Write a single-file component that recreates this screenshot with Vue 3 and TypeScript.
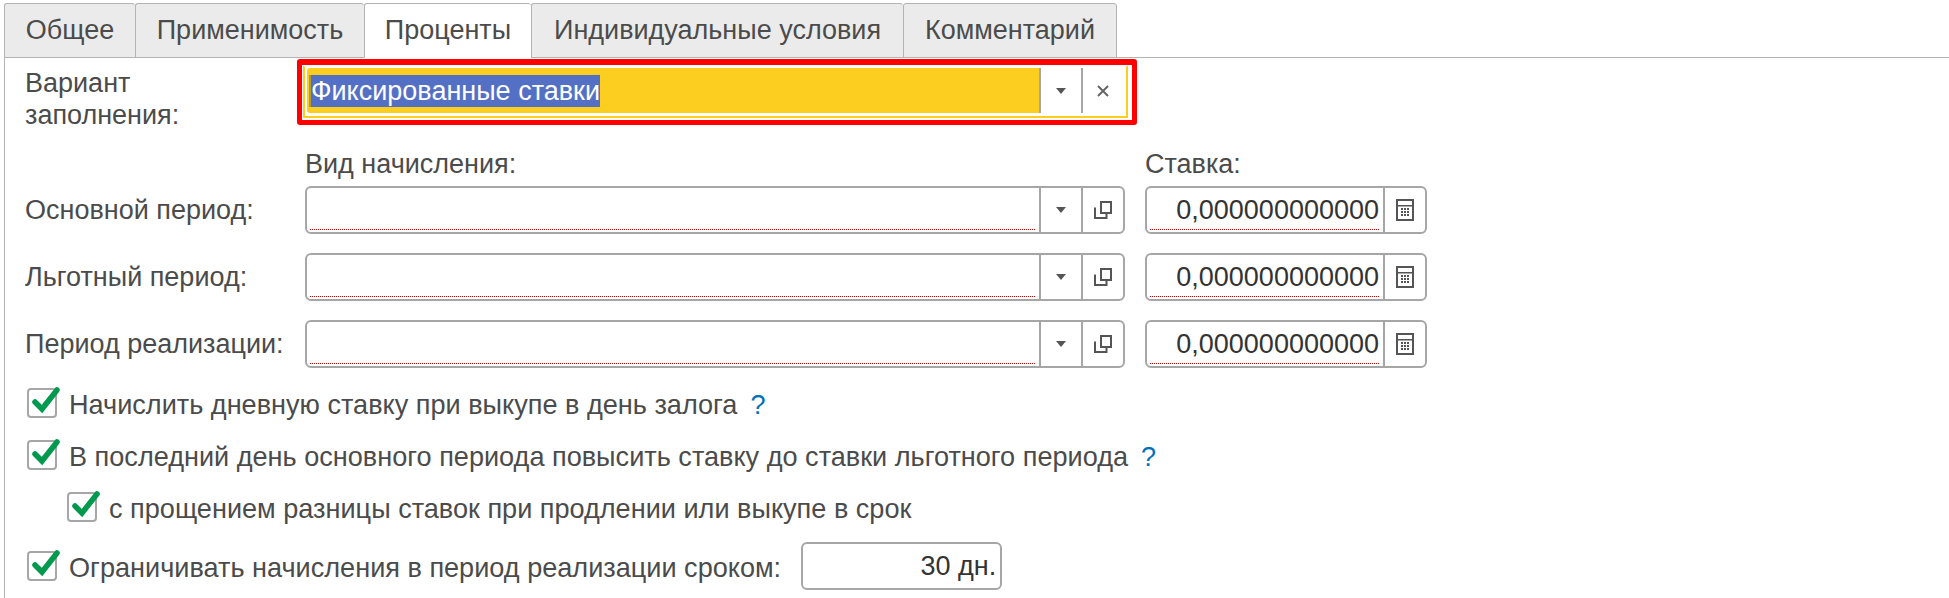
<script setup lang="ts">
const tabs = [
  { name: 'Общее', w: 131, active: false },
  { name: 'Применимость', w: 229, active: false },
  { name: 'Проценты', w: 167, active: true },
  { name: 'Индивидуальные условия', w: 372, active: false },
  { name: 'Комментарий', w: 214, active: false },
]
const periods = ['Основной период:', 'Льготный период:', 'Период реализации:']
</script>

<template>
  <div class="page">
    <div class="tabs">
      <div
        v-for="t in tabs"
        :key="t.name"
        class="tab"
        :class="{ active: t.active }"
        :style="{ width: t.w + 'px' }"
      >{{ t.name }}</div>
    </div>
    <div class="panel">
      <div class="variant">
        <div class="variant-label">Вариант<br />заполнения:</div>
        <div class="frame">
          <div class="focus">
            <div class="fill"><span class="sel">Фиксированные ставки</span></div>
            <div class="btn">
              <svg width="10" height="6" viewBox="0 0 10 6"><path d="M0 0h10L5 6z" fill="#555" /></svg>
            </div>
            <div class="btn">
              <svg width="12" height="12" viewBox="0 0 12 12"><path d="M1 1l10 10M11 1L1 11" stroke="#666" stroke-width="2" fill="none" /></svg>
            </div>
          </div>
        </div>
      </div>

      <div class="grid heads">
        <div></div>
        <div class="head">Вид начисления:</div>
        <div class="head">Ставка:</div>
      </div>

      <div v-for="p in periods" :key="p" class="grid period">
        <div class="label">{{ p }}</div>
        <div class="field">
          <div class="input"><span class="dots"></span></div>
          <div class="btn">
            <svg width="10" height="6" viewBox="0 0 10 6"><path d="M0 0h10L5 6z" fill="#555" /></svg>
          </div>
          <div class="btn">
            <svg width="18" height="18" viewBox="0 0 18 18" fill="none" stroke="#555" stroke-width="2">
              <path d="M1 6.500V17h11.500v-4" />
              <rect x="7" y="1" width="10" height="11" />
            </svg>
          </div>
        </div>
        <div class="field">
          <div class="input number"><span class="value">0,000000000000</span><span class="dots"></span></div>
          <div class="btn">
            <svg width="18" height="22" viewBox="0 0 18 22">
              <rect x="1" y="1" width="16" height="20" fill="none" stroke="#555" stroke-width="2" />
              <rect x="2" y="6" width="14" height="1.500" fill="#555" />
              <g fill="#555">
                <rect x="5" y="9" width="2" height="2" /><rect x="8" y="9" width="2" height="2" /><rect x="11" y="9" width="2" height="2" />
                <rect x="5" y="12" width="2" height="2" /><rect x="8" y="12" width="2" height="2" /><rect x="11" y="12" width="2" height="2" />
                <rect x="5" y="15" width="2" height="2" /><rect x="8" y="15" width="2" height="2" /><rect x="11" y="15" width="2" height="2" />
              </g>
            </svg>
          </div>
        </div>
      </div>

      <div class="checks">
        <div class="check">
          <span class="box"><svg class="tick" width="30" height="30" viewBox="0 0 30 30"><path d="M8 14l7 7L30 2" /></svg></span>
          <span class="text">Начислить дневную ставку при выкупе в день залога</span>
          <span class="text help">?</span>
        </div>
        <div class="check">
          <span class="box"><svg class="tick" width="30" height="30" viewBox="0 0 30 30"><path d="M8 14l7 7L30 2" /></svg></span>
          <span class="text">В последний день основного периода повысить ставку до ставки льготного периода</span>
          <span class="text help">?</span>
        </div>
        <div class="check nested">
          <span class="box"><svg class="tick" width="30" height="30" viewBox="0 0 30 30"><path d="M8 14l7 7L30 2" /></svg></span>
          <span class="text">с прощением разницы ставок при продлении или выкупе в срок</span>
        </div>
        <div class="check last">
          <span class="box"><svg class="tick" width="30" height="30" viewBox="0 0 30 30"><path d="M8 14l7 7L30 2" /></svg></span>
          <span class="text">Ограничивать начисления в период реализации сроком:</span>
          <div class="days">30 дн.</div>
        </div>
      </div>
    </div>
  </div>
</template>

<style scoped>
.page {
  width: 1949px;
  height: 598px;
  display: flex;
  flex-direction: column;
  overflow: hidden;
  background: #fff;
  font-family: "Liberation Sans", Arial, sans-serif;
  font-size: 27px;
  color: #4b4b4b;
}
.tabs {
  display: flex;
  height: 54px;
  margin-top: 3px;
  padding-left: 4px;
  position: relative;
  z-index: 1;
}
.tab {
  box-sizing: border-box;
  height: 55px;
  display: flex;
  align-items: center;
  justify-content: center;
  background: #ebebeb;
  border: 1px solid #b4b4b4;
  border-right-width: 0;
  border-radius: 3px 3px 0 0;
}
.tab:last-child {
  border-right-width: 1px;
}
.tab.active {
  background: #fff;
  border-bottom-color: #fff;
}
.panel {
  flex: 1;
  border-top: 1px solid #b4b4b4;
  border-left: 1px solid #b4b4b4;
  margin-left: 4px;
  padding-left: 20px;
  display: flex;
  flex-direction: column;
}
.variant {
  display: flex;
  height: 66px;
  margin-top: 1px;
}
.variant-label {
  width: 272px;
  line-height: 32px;
  padding-top: 8px;
}
.frame {
  box-sizing: border-box;
  width: 840px;
  height: 66px;
  border: 5px solid #ff0000;
  border-top-width: 6px;
  border-radius: 3px;
  padding: 0 4px 2px 1px;
}
.focus {
  box-sizing: border-box;
  height: 100%;
  border: 2px solid #fbce1f;
  border-top-color: #fff;
  padding: 1px 3px 3px 2px;
  display: flex;
}
.fill {
  flex: 1;
  background: #fbce1f;
  border-radius: 3px 0 0 3px;
  padding-left: 2px;
  display: flex;
  align-items: center;
}
.sel {
  background: #5470c4;
  color: #fff;
  line-height: 32px;
  border-left: 2px solid #b09a3a;
}
.btn {
  width: 42px;
  flex: none;
  display: flex;
  align-items: center;
  justify-content: center;
  border-left: 2px solid #a6a6a6;
  box-sizing: border-box;
}
.grid {
  display: grid;
  grid-template-columns: 260px 820px 282px;
  column-gap: 20px;
}
.heads {
  margin-top: 26px;
  height: 35px;
  line-height: 27px;
}
.period {
  height: 48px;
  margin-bottom: 19px;
}
.label {
  align-self: center;
}
.field {
  box-sizing: border-box;
  display: flex;
  height: 48px;
  border: 2px solid #a6a6a6;
  border-radius: 6px;
  background: #fff;
}
.input {
  flex: 1;
  position: relative;
  padding-right: 4px;
  text-align: right;
  color: #333;
  line-height: 44px;
}
.dots {
  position: absolute;
  left: 3px;
  right: 4px;
  bottom: 2px;
  border-bottom: 1px dotted #d00000;
}
.checks {
  display: flex;
  flex-direction: column;
  gap: 22px;
  margin-top: 1px;
}
.check {
  display: flex;
  align-items: center;
  height: 30px;
  padding-left: 2px;
}
.check.nested {
  padding-left: 42px;
}
.check.last {
  height: 48px;
  margin-top: -2px;
}
.text {
  font-size: 27.1px;
  padding-top: 4px;
}
.box {
  box-sizing: border-box;
  flex: none;
  width: 30px;
  height: 30px;
  border: 2px solid #a6a6a6;
  border-radius: 4px;
  margin-right: 12px;
  position: relative;
}
.tick {
  position: absolute;
  left: -2px;
  top: -2px;
  overflow: visible;
}
.tick path {
  fill: none;
  stroke: #00994d;
  stroke-width: 5.5px;
  stroke-linecap: round;
}
.help {
  color: #0070b8;
  margin-left: 13px;
}
.days {
  box-sizing: border-box;
  width: 201px;
  height: 48px;
  margin-left: 20px;
  border: 2px solid #a6a6a6;
  border-radius: 6px;
  text-align: right;
  line-height: 44px;
  padding-right: 4px;
  color: #333;
}
</style>
